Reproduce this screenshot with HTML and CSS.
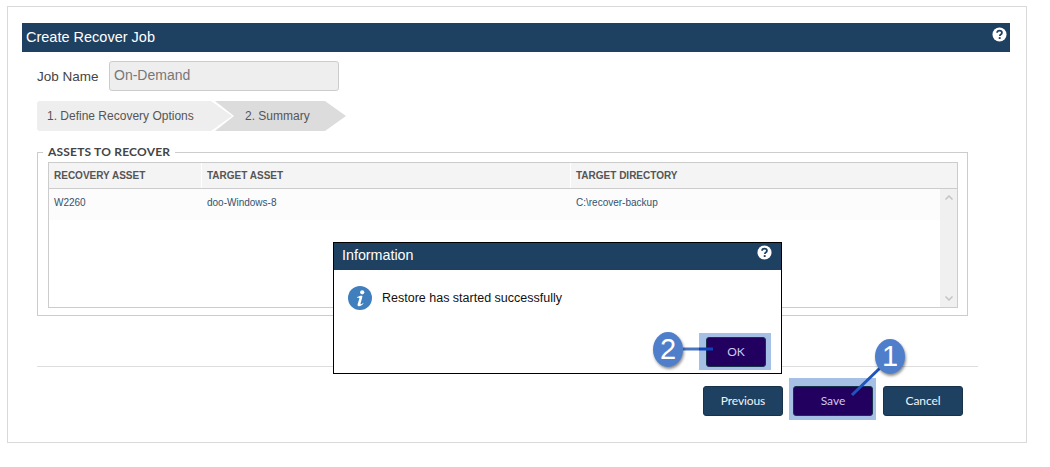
FILE: index.html
```html
<!DOCTYPE html>
<html lang="en">
<head>
<meta charset="utf-8">
<title>Create Recover Job</title>
<link rel="stylesheet" href="styles.css">
</head>
<body>
<main class="panel">
  <header class="title-bar">
    <span>Create Recover Job</span>
    <svg class="help" viewBox="0 0 16 16"><circle cx="8" cy="8" r="7.500" fill="#fff"/><path d="M5.400 6.200C5.500 4.700 6.600 3.900 8 3.900c1.500 0 2.600.9 2.600 2.200 0 1-.6 1.500-1.300 2-.6.4-.9.8-.9 1.500" fill="none" stroke="#1f4161" stroke-width="1.900"/><rect x="7.200" y="10.800" width="2" height="2" fill="#1f4161"/></svg>
  </header>
  <div class="job-row">
    <label class="job-label">Job Name</label>
    <div class="job-input">On-Demand</div>
  </div>
  <nav class="steps">
    <div class="step step-one">1. Define Recovery Options</div>
    <div class="step step-two">2. Summary</div>
  </nav>
  <fieldset class="assets">
    <legend>ASSETS TO RECOVER</legend>
    <div class="table">
      <div class="thead">
        <div class="th col-a">RECOVERY ASSET</div>
        <div class="th col-b">TARGET ASSET</div>
        <div class="th col-c">TARGET DIRECTORY</div>
      </div>
      <div class="tbody">
        <div class="rows">
          <div class="row">
            <div class="td col-a">W2260</div>
            <div class="td col-b">doo-Windows-8</div>
            <div class="td col-c">C:\recover-backup</div>
          </div>
        </div>
        <div class="scrollbar">
          <svg viewBox="0 0 8 5"><path d="M.5 4.500 4 1l3.500 3.500" fill="none" stroke="#c4c4c4" stroke-width="1.500"/></svg>
          <svg viewBox="0 0 8 5"><path d="M.5.5 4 4 7.500.5" fill="none" stroke="#c4c4c4" stroke-width="1.500"/></svg>
        </div>
      </div>
    </div>
  </fieldset>
  <div class="divider"></div>
  <footer class="actions">
    <button class="btn">Previous</button>
    <span class="highlight highlight-save"><button class="btn btn-active">Save</button></span>
    <button class="btn">Cancel</button>
  </footer>
</main>

<section class="dialog">
  <header class="dialog-bar">
    <span>Information</span>
    <svg class="help" viewBox="0 0 16 16"><circle cx="8" cy="8" r="7.500" fill="#fff"/><path d="M5.400 6.200C5.500 4.700 6.600 3.900 8 3.900c1.500 0 2.600.9 2.600 2.200 0 1-.6 1.500-1.300 2-.6.4-.9.8-.9 1.500" fill="none" stroke="#1f4161" stroke-width="1.900"/><rect x="7.200" y="10.800" width="2" height="2" fill="#1f4161"/></svg>
  </header>
  <div class="dialog-body">
    <svg class="info" viewBox="0 0 24 24"><circle cx="12" cy="12" r="12" fill="#3f7fbd"/><circle cx="14.200" cy="6.300" r="2.100" fill="#fff"/><path d="M9 11.200c1.700-1.400 4.500-2 5.300-1.200.6.600-1.900 7-1.700 8 .1.700 1.300.2 2.500-.9l.4.5c-1.700 1.900-3.400 2.800-5 2.600-1.300-.3-1-1.600-.5-3.100l1.300-4.300c.3-1.200-.7-1-2-.9z" fill="#fff"/></svg>
    <span>Restore has started successfully</span>
  </div>
  <div class="dialog-actions">
    <span class="highlight highlight-ok"><button class="btn btn-active btn-ok">OK</button></span>
  </div>
</section>

<svg class="callouts" viewBox="0 0 1050 467">
  <path d="M683 349H699" stroke="#4a76c0" stroke-width="3"/>
  <path d="M699 349H713" stroke="#0f44b8" stroke-width="3"/>
  <path d="M880 368 852 395" stroke="#1f55bd" stroke-width="3"/>
</svg>
<div class="badge badge-one">1</div>
<div class="badge badge-two">2</div>
</body>
</html>
```

FILE: styles.css
```css
* { box-sizing: border-box; }
html, body { margin: 0; height: 467px; overflow: hidden; background: #fff; }
body { padding: 6px 0 0 7px; font-family: "Liberation Sans", Arial, sans-serif; color: #333; }

.panel {
  width: 1020px;
  height: 437px;
  border: 1px solid #d9d9d9;
  padding: 16px 16px 0 14px;
}

.title-bar {
  height: 29px;
  width: 988px;
  background: #1f4161;
  color: #fff;
  font-size: 14.500px;
  line-height: 28px;
  padding: 0 3px 0 4px;
  display: flex;
  justify-content: space-between;
}
.help { width: 15px; height: 15px; margin-top: 4px; }

.job-row {
  display: flex;
  align-items: center;
  margin: 9px 0 0 15px;
  height: 30px;
}
.job-label { width: 72px; font-size: 13.500px; color: #444; }
.job-input {
  width: 230px;
  height: 30px;
  background: #eee;
  border: 1px solid #ccc;
  border-radius: 3px;
  font-size: 14px;
  line-height: 26px;
  padding-left: 4px;
  color: #777;
}

.steps { display: flex; margin: 10px 0 0 15px; height: 30px; }
.step { font-size: 12px; line-height: 30px; color: #555; height: 30px; }
.step-one {
  width: 195px;
  padding-left: 10px;
  background: #eee;
  border-radius: 3px 0 0 3px;
  clip-path: polygon(0 0, 174px 0, 195px 15px, 174px 100%, 0 100%);
}
.step-two {
  width: 131px;
  margin-left: -17px;
  padding-left: 30px;
  background: #dcdcdc;
  clip-path: polygon(0 0, 110px 0, 131px 15px, 110px 100%, 0 100%, 19px 15px);
}

.assets {
  margin: 14px 0 0 15px;
  padding: 0 9px 7px 10px;
  width: 931px;
  height: 171px;
  border: 1px solid #ccc;
  min-width: 0;
}
.assets legend {
  font-family: Lato, sans-serif;
  font-size: 12px;
  font-weight: 700;
  letter-spacing: .2px;
  color: #444;
  padding: 0 5px;
  margin-left: -5px;
  line-height: 14px;
}

.table { width: 910px; height: 146px; border: 1px solid #ccc; margin-top: 3px; }
.thead { display: flex; height: 26px; background: #f4f4f4; border-bottom: 1px solid #ccc; }
.th {
  font-size: 10px;
  font-weight: 700;
  color: #555;
  line-height: 25px;
  padding-left: 5px;
}
.th + .th { border-left: 1px solid #fff; }
.col-a { width: 152px; }
.col-b { width: 369px; }
.col-c { flex: 1; }

.tbody { display: flex; height: 118px; }
.rows { flex: 1; }
.row { display: flex; height: 31px; background: #fcfcfc; }
.td { font-size: 10px; line-height: 27px; padding-left: 5px; color: #31536f; }
.td + .td { padding-left: 6px; }
.scrollbar {
  width: 17px;
  background: #f0f0f0;
  display: flex;
  flex-direction: column;
  justify-content: space-between;
  align-items: center;
  padding: 6px 0;
}
.scrollbar svg { width: 8px; height: 5px; }

.divider { width: 941px; height: 1px; background: #ddd; margin: 50px 0 0 15px; }

.actions { display: flex; align-items: flex-start; gap: 10px; margin: 19px 0 0 681px; }
.btn {
  width: 80px;
  height: 30px;
  border: 1px solid #17324b;
  border-radius: 3px;
  background: #1f4161;
  color: #f2f4f6;
  font-family: Lato, sans-serif;
  font-size: 12px;
  letter-spacing: -.1px;
  padding: 0 0 2px;
  display: block;
}
.btn-active {
  background: #220060;
  color: #cfc8ea;
  letter-spacing: 0;
}
.highlight { display: block; background: #a6bfe4; flex: none; }
.highlight-save { padding: 8px 3px 4px 4px; margin: -8px -3px -4px -4px; }
.highlight-ok { padding: 4px 5px 3px 7px; margin: -4px -5px -3px -7px; }

.dialog {
  position: absolute;
  left: 333px;
  top: 242px;
  width: 449px;
  height: 132px;
  background: #fff;
  border: 1px solid #000;
  display: flex;
  flex-direction: column;
}
.dialog-bar {
  height: 27px;
  background: #1f4161;
  color: #fff;
  font-size: 14.300px;
  line-height: 24px;
  padding: 0 9px 0 8px;
  display: flex;
  justify-content: space-between;
  flex: none;
}
.dialog-bar .help { margin-top: 2px; }
.dialog-body {
  display: flex;
  align-items: center;
  gap: 10px;
  padding: 16px 0 0 14px;
  font-size: 12.500px;
  color: #111;
}
.info { width: 24px; height: 24px; }
.dialog-actions { display: flex; justify-content: flex-end; padding: 27px 15px 0 0; }
.btn-ok { width: 60px; }

.callouts { position: absolute; left: 0; top: 0; width: 1050px; height: 467px; pointer-events: none; }
.badge {
  position: absolute;
  width: 30px;
  height: 35px;
  border-radius: 50%;
  background: #4f7fcb;
  color: #fff;
  font-size: 29px;
  line-height: 34px;
  text-align: center;
  box-shadow: 1px 2px 3px rgba(0, 0, 0, .45);
}
.badge-one { left: 875px; top: 339px; }
.badge-two { left: 653px; top: 332px; }
```
